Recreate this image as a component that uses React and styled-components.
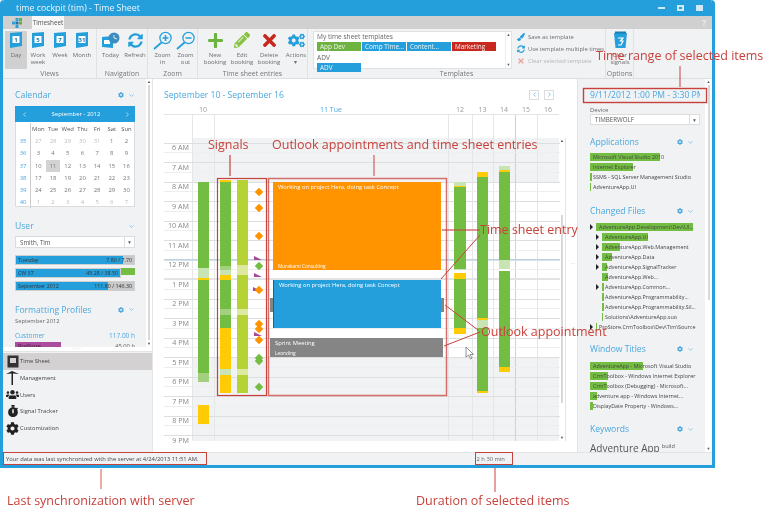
import React from 'react';
import styled, { createGlobalStyle } from 'styled-components';
import { FaCog, FaCogs, FaPencilAlt, FaPlus, FaTimes, FaSyncAlt, FaUsers, FaStopwatch, FaPaintBrush } from 'react-icons/fa';
import { FiChevronDown, FiChevronLeft, FiChevronRight } from 'react-icons/fi';

const Global = createGlobalStyle`
  html, body { margin: 0; padding: 0; background: #fff; }
  * { box-sizing: border-box; }
  body { font-family: "Open Sans", "Liberation Sans", sans-serif; color: #444; }
`;

const BLUE = '#259fdb';
const GREEN = '#74bd43';
const LIGHT = '#c8e3b4';
const YELLOW = '#ffcb05';
const LIME = '#b5d334';
const LIME_L = '#dde9a0';
const MID = '#a2d07f';

const Page = styled.div`
  position: relative;
  width: 764px;
  height: 509px;
  overflow: hidden;
  background: #fff;
  filter: blur(0.3px);
`;
const Window = styled.div`
  width: 715px;
  height: 468px;
  display: flex;
  flex-direction: column;
  border: solid ${BLUE};
  border-width: 0 3px 3px 3px;
  border-radius: 4px 4px 0 0;
  background: #f1f2f4;
  overflow: hidden;
`;
const TitleBar = styled.div`
  height: 16px;
  flex: none;
  display: flex;
  align-items: center;
  justify-content: space-between;
  padding: 0 3px 0 13px;
  background: ${BLUE};
  color: #e8f5fc;
  font-size: 8.8px;
`;
const WinButtons = styled.div`
  display: flex;
  gap: 12px;
  align-items: center;
  margin-right: 6px;
`;
const WinBtn = styled.span`
  display: block;
  width: 7px;
  height: ${p => p.$h}px;
  background: ${p => p.$hollow ? 'transparent' : '#cfe9f7'};
  border: ${p => p.$hollow ? '2px solid #cfe9f7' : 'none'};
`;
const TabRow = styled.div`
  height: 13px;
  flex: none;
  display: flex;
  align-items: stretch;
  background: #d0d0d0;
  padding-left: 9px;
`;
const Logo = styled.div`
  width: 20px;
  display: flex;
  align-items: center;
`;
const Tab = styled.div`
  width: 32px;
  background: #f7f7f8;
  font-size: 6.3px;
  line-height: 13px;
  text-align: center;
  color: #555;
`;
const TabHelp = styled.div`
  margin-left: auto;
  margin-right: 6px;
  color: #eee;
  font-size: 8px;
  font-weight: 700;
  line-height: 13px;
`;
const Ribbon = styled.div`
  height: 50px;
  flex: none;
  display: flex;
  background: #f1f2f4;
  border-bottom: 1px solid #dcdee0;
`;
const Group = styled.div`
  width: ${p => p.$w}px;
  flex: none;
  display: flex;
  flex-direction: column;
  border-right: 1px solid #dfe1e3;
`;
const GroupBody = styled.div`
  height: 40px;
  margin-top: 2px;
  padding: 0 ${p => p.$pad ?? 2}px;
  display: flex;
  gap: ${p => p.$gap ?? 0}px;
`;
const GroupLabel = styled.div`
  font-size: 6.9px;
  line-height: 9px;
  color: #777;
  text-align: center;
`;
const RibbonBtn = styled.div`
  width: ${p => p.$w ?? 22}px;
  height: 38px;
  flex: none;
  display: flex;
  flex-direction: column;
  align-items: center;
  background: ${p => p.$on ? '#d0d0d0' : 'transparent'};
  color: #6d6d6d;
  font-size: 6px;
  line-height: 7px;
  text-align: center;
  white-space: nowrap;
`;
const IconSlot = styled.div`
  height: 18px;
  margin-bottom: 3px;
  display: flex;
  align-items: center;
  justify-content: center;
  color: ${p => p.$c ?? BLUE};
`;
const TemplateBox = styled.div`
  width: 199px;
  height: 38px;
  flex: none;
  margin-left: 5px;
  padding: 2px 3px;
  background: #fff;
  border: 1px solid #dfe1e3;
  font-size: 6.6px;
  line-height: 6px;
  color: #666;
  position: relative;
`;
const ChipRow = styled.div`
  display: flex;
  gap: 1px;
  margin: 2px 0 4px;
`;
const Chip = styled.div`
  width: 44px;
  height: 9px;
  padding-left: 3px;
  background: ${p => p.$c};
  color: #f4f4f4;
  font-size: 6.4px;
  line-height: 9px;
  white-space: nowrap;
`;
const MiniScroll = styled.div`
  position: absolute;
  right: 0;
  top: 0;
  bottom: 0;
  width: 6px;
  display: flex;
  flex-direction: column;
  justify-content: space-between;
  align-items: center;
  color: #555;
  font-size: 4px;
  line-height: 6px;
  border-left: 1px solid #eee;
`;
const TemplateActions = styled.div`
  display: flex;
  flex-direction: column;
  gap: 3px;
  padding: 1px 0 0 5px;
`;
const ActionLine = styled.div`
  display: flex;
  align-items: center;
  gap: 3px;
  height: 9px;
  font-size: 5.8px;
  white-space: nowrap;
  color: ${p => p.$off ? '#b5b5b5' : '#6d6d6d'};
  svg { color: ${p => p.$c}; }
`;

const Body = styled.div`
  flex: 1;
  min-height: 0;
  display: flex;
`;
const Sidebar = styled.div`
  width: 149px;
  flex: none;
  display: flex;
  flex-direction: column;
  background: #f1f2f4;
`;
const SideTop = styled.div`
  height: 268px;
  flex: none;
  display: flex;
  overflow: hidden;
`;
const SideScroll = styled.div`
  width: 143px;
  flex: none;
  padding: 9px 0 0 12px;
  overflow: hidden;
`;
const ScrollStrip = styled.div`
  width: ${p => p.$w ?? 6}px;
  flex: none;
  background: #fff;
  display: flex;
  flex-direction: column;
  align-items: center;
  color: #555;
  font-size: 4px;
  line-height: 6px;
  span:last-child { margin-top: auto; }
`;
const StripThumb = styled.div`
  width: 2px;
  height: ${p => p.$h}px;
  background: #d9d9d9;
`;
const Heading = styled.div`
  display: flex;
  align-items: center;
  height: ${p => p.$h ?? 14}px;
  width: ${p => p.$w ?? 120}px;
  margin-top: ${p => p.$mt ?? 0}px;
  color: #4ba8de;
  font-size: 8.6px;
`;
const Tools = styled.div`
  display: flex;
  align-items: center;
  gap: 4px;
  margin-left: auto;
  color: #4ba8de;
`;
const Cal = styled.div`
  width: 120px;
  height: 101px;
  margin-top: 4px;
  background: #fff;
  border: solid #dcdcdc;
  border-width: 0 1px 1px 1px;
`;
const CalHead = styled.div`
  height: 16px;
  margin: 0 -1px;
  display: flex;
  align-items: center;
  justify-content: space-between;
  padding: 0 4px 0 6px;
  background: ${BLUE};
  color: #fff;
  font-size: 5.9px;
`;
const CalGrid = styled.div`
  display: grid;
  grid-template-columns: 15px repeat(7, 14.7px);
  grid-auto-rows: 12.2px;
  padding-top: 1px;
  font-size: 5.9px;
  line-height: 12.2px;
  text-align: center;
`;
const Cell = styled.div`
  color: ${p => p.$week ? '#4ba8de' : p.$head ? '#555' : p.$off ? '#bdbdbd' : '#777'};
  background: ${p => p.$sel ? '#d3d3d3' : 'transparent'};
  border-right: ${p => p.$week ? '1px solid #ccc' : 'none'};
`;
const Combo = styled.div`
  width: ${p => p.$w ?? 120}px;
  height: ${p => p.$h ?? 12}px;
  margin-top: ${p => p.$mt ?? 3}px;
  display: flex;
  align-items: center;
  justify-content: space-between;
  padding-left: 4px;
  background: #fff;
  border: 1px solid #dcdcdc;
  font-size: 6.2px;
  color: #555;
  span { width: 10px; border-left: 1px solid #ddd; text-align: center; font-size: 5px; line-height: 10px; color: #666; }
`;
const Progress = styled.div`
  width: ${p => p.$w}px;
  height: 10px;
  margin-top: ${p => p.$mt ?? 3}px;
  padding: 1px 2px 0;
  display: flex;
  justify-content: space-between;
  font-size: 5.3px;
  line-height: 7px;
  color: #333;
  white-space: nowrap;
  border: 1px solid #cfcfcf;
  background: linear-gradient(90deg, ${BLUE} ${p => p.$fill}px, #c9c9c9 0);
`;
const GreenTail = styled.div`
  display: flex;
  width: 120px;
`;
const TailPiece = styled.div`
  flex: 1;
  height: 7px;
  margin-top: 3px;
  background: ${GREEN};
`;
const SubTitle = styled.div`
  font-size: 5.8px;
  line-height: 8px;
  color: #666;
`;
const ProfileRow = styled.div`
  width: 120px;
  margin-top: ${p => p.$mt ?? 0}px;
  display: flex;
  justify-content: space-between;
  font-size: ${p => p.$size ?? 6.5}px;
  line-height: 9px;
  color: ${p => p.$c ?? '#4ba8de'};
`;
const Tag = styled.div`
  width: 46px;
  height: 8px;
  background: #ab4c9f;
  color: #3a1c36;
  font-size: 5.6px;
  line-height: 8px;
  padding-left: 3px;
`;
const Splitter = styled.div`
  height: 5px;
  flex: none;
  background: #fff;
  border-bottom: 1px solid #e4e4e4;
  text-align: center;
  color: #888;
  font-size: 4px;
  line-height: 4px;
  letter-spacing: 1px;
`;
const NavList = styled.div`
  flex: 1;
  padding-top: 1px;
`;
const NavItem = styled.div`
  height: 16.7px;
  display: flex;
  align-items: center;
  padding-left: 3px;
  gap: 1px;
  font-size: 5.8px;
  color: #444;
  background: ${p => p.$on ? '#d3d1d2' : 'transparent'};
`;
const NavIcon = styled.div`
  width: 13px;
  height: 14px;
  display: flex;
  align-items: center;
  justify-content: center;
  color: #222;
`;

const Main = styled.div`
  width: 426px;
  flex: none;
  position: relative;
  background: #fff;
  padding: 9px 0 0 11px;
  border-right: 1px solid #e2e3e5;
  border-left: 1px solid #e6e6e6;
`;
const MainHead = styled.div`
  height: 13px;
  width: 396px;
  display: flex;
  align-items: center;
  justify-content: space-between;
  font-size: 8.6px;
  color: #4ba8de;
`;
const NavPair = styled.div`
  display: flex;
  gap: 5px;
  margin-right: 6px;
`;
const NavBox = styled.div`
  width: 10px;
  height: 10px;
  border: 1px solid #dcdcdc;
  display: flex;
  align-items: center;
  justify-content: center;
  color: ${BLUE};
`;
const DayHead = styled.div`
  display: flex;
  height: 13px;
  padding-left: 28px;
  margin-top: 1px;
  border-bottom: 1px solid #e4e4e4;
  width: 395px;
`;
const DayName = styled.div`
  width: ${p => p.$w}px;
  flex: none;
  text-align: center;
  font-size: 7px;
  line-height: 15px;
  color: ${p => p.$today ? '#4ba8de' : '#999'};
`;
const Grid = styled.div`
  width: 403px;
  height: 326px;
  display: flex;
  position: relative;
`;
const TimeCol = styled.div`
  width: 28px;
  flex: none;
  padding-top: 27px;
`;
const TimeLabel = styled.div`
  height: 19.5px;
  font-size: 7.2px;
  line-height: 11px;
  text-align: right;
  padding-right: 3px;
  color: #888;
`;
const Day = styled.div`
  position: relative;
  width: ${p => p.$w}px;
  flex: none;
  display: flex;
  flex-direction: column;
  border-left: 1px solid ${p => p.$strong ? '#cfd1d3' : '#e4e6e8'};
`;
const Band = styled.div`
  height: ${p => p.$h}px;
  flex: none;
  background: ${p => p.$gray ? '#f1f2f4' : '#fff'};
`;
const HourLines = styled.div`
  position: absolute;
  left: 0;
  right: 7px;
  top: 23px;
  bottom: 0;
  pointer-events: none;
  background: repeating-linear-gradient(to bottom,
    transparent 0 4.5px, #dcdee0 4.5px 5.5px,
    transparent 5.5px 14.25px, #eceef0 14.25px 15.25px, transparent 15.25px 19.5px);
`;
const NoonLine = styled.div`
  position: absolute;
  left: 0;
  right: 7px;
  top: ${p => p.$top}px;
  height: ${p => p.$h ?? 1}px;
  background: ${p => p.$c};
`;
const EventLayer = styled.div`
  position: absolute;
  inset: 0;
`;
const Stack = styled.div`
  position: absolute;
  left: ${p => p.$x}px;
  top: ${p => p.$y}px;
  width: ${p => p.$w ?? 11}px;
  display: flex;
  flex-direction: column;
`;
const Seg = styled.div`
  height: ${p => p.$h}px;
  background: ${p => p.$c};
`;
const Block = styled.div`
  position: absolute;
  left: ${p => p.$x}px;
  top: ${p => p.$y}px;
  width: ${p => p.$w}px;
  height: ${p => p.$h}px;
  background: ${p => p.$c};
  color: #fff;
  font-size: 5.8px;
  line-height: 8px;
  padding: 1px 5px;
  display: flex;
  flex-direction: column;
  justify-content: space-between;
  white-space: nowrap;
  border-left: ${p => p.$edge ? `1px solid ${p.$edge}` : 'none'};
`;
const BlockSub = styled.span`
  font-size: 4.8px;
  line-height: 6px;
`;
const Diamond = styled.div`
  position: absolute;
  left: ${p => p.$x - 3}px;
  top: ${p => p.$y - 3}px;
  width: 6px;
  height: 6px;
  transform: rotate(45deg);
  background: ${p => p.$c};
`;
const Flag = styled.div`
  position: absolute;
  left: ${p => p.$x - 4}px;
  top: ${p => p.$y - 2}px;
  width: 0;
  height: 0;
  border-left: 8px solid #a8479b;
  border-top: 4px solid transparent;
`;
const GridScroll = styled.div`
  width: 7px;
  flex: none;
  margin-top: 23px;
  display: flex;
  flex-direction: column;
  align-items: center;
  justify-content: space-between;
  font-size: 4px;
  line-height: 6px;
  color: #555;
  position: relative;
  border-right: 1px solid #e4e4e4;
`;
const Thumb = styled.div`
  position: absolute;
  top: 77px;
  height: 188px;
  width: 2px;
  background: #d9d9d9;
`;
const Grip = styled.div`
  position: absolute;
  right: 3px;
  top: 183px;
  font-size: 5px;
  line-height: 2.5px;
  width: 3px;
  color: #bbb;
`;

const RightPanel = styled.div`
  width: 134px;
  flex: none;
  display: flex;
  overflow: hidden;
`;
const RightScroll = styled.div`
  width: 127px;
  flex: none;
  padding: 10px 0 0 12px;
  background: #f1f2f4;
  overflow: hidden;
`;
const DateRange = styled.div`
  width: 110px;
  font-size: 8.6px;
  line-height: 12px;
  white-space: nowrap;
  overflow: hidden;
  color: #4ba8de;
`;
const Small = styled.div`
  margin-top: 5px;
  font-size: 6px;
  line-height: 8px;
  color: #666;
`;
const Spacer = styled.div`
  height: ${p => p.$h}px;
`;
const ListRow = styled.div`
  width: ${p => p.$w ?? 114}px;
  height: 10px;
  margin-left: ${p => p.$indent ?? 0}px;
  position: relative;
  display: flex;
  align-items: center;
  padding-left: 3px;
  font-size: 5.4px;
  line-height: 8px;
  white-space: nowrap;
  color: #444;
  background: linear-gradient(90deg, ${GREEN} ${p => p.$fill}px, transparent 0) no-repeat 0 1px / 100% 8px;
`;
const Arrow = styled.span`
  position: absolute;
  left: -6px;
  top: 2px;
  width: 0;
  height: 0;
  border-left: 3px solid #222;
  border-top: 3px solid transparent;
  border-bottom: 3px solid transparent;
`;
const Keyword = styled.div`
  margin-top: 5px;
  font-size: 10px;
  line-height: 14px;
  color: #555;
  white-space: nowrap;
  sup { font-size: 5.6px; line-height: 0; vertical-align: 4px; margin-left: 2px; }
`;

const Status = styled.div`
  height: 13px;
  flex: none;
  display: flex;
  align-items: center;
  padding-left: 3px;
  font-size: 5.8px;
  color: #444;
  background: #f1f2f4;
  border-top: 1px solid #e4e4e4;
`;
const Duration = styled.div`
  margin-left: 278px;
  color: #666;
`;

// the red notes and lines drawn on top of the screenshot
const Note = styled.div`
  position: absolute;
  left: ${p => p.$x}px;
  top: ${p => p.$y}px;
  color: #c8423c;
  font-size: 12.5px;
  line-height: 18px;
  white-space: nowrap;
`;
const Lines = styled.svg`
  position: absolute;
  inset: 0;
  pointer-events: none;
`;

function CalIcon({ n }) {
  return (
    <svg width="14" height="17" viewBox="0 0 14 17">
      <path d="M1 1 L13 0 V14 L1 16 Z" fill={BLUE} />
      <rect x="3.5" y="4" width="7" height="7" fill="#fff" />
      <text x="7" y="10" fontSize="6" fontFamily="Open Sans" fontWeight="700" textAnchor="middle" fill="#257aa8">{n}</text>
    </svg>
  );
}
function ZoomIcon({ plus }) {
  return (
    <svg width="21" height="19" viewBox="0 0 21 19" fill="none" stroke={BLUE}>
      <circle cx="13.5" cy="7" r="5.6" strokeWidth="1.3" />
      <path d="M9.5 11.5 L2 18" strokeWidth="1.8" />
      <path d="M10.5 7 H16.5" strokeWidth="1.6" />
      {plus && <path d="M13.5 4 V10" strokeWidth="1.6" />}
    </svg>
  );
}
function TodayIcon() {
  return (
    <svg width="18" height="17" viewBox="0 0 18 17">
      <path d="M0 5 L11 4 V16 L0 15 Z" fill={BLUE} />
      <rect x="2" y="8" width="6" height="4" fill="#fff" />
      <circle cx="12" cy="6" r="5.5" fill="#3b8dbd" />
      <path d="M12 3 V6 L15 7" stroke="#fff" fill="none" strokeWidth="0.8" />
    </svg>
  );
}
function LogoIcon() {
  return (
    <svg width="10" height="10" viewBox="0 0 10 10">
      <rect x="3.5" y="0" width="3" height="3" fill="#2f9fd8" />
      <rect x="7" y="0" width="3" height="3" fill="#5fb346" />
      <rect x="0" y="3.5" width="3" height="3" fill="#2f9fd8" />
      <rect x="3.5" y="3.5" width="3" height="3" fill="#2c6ea0" />
      <rect x="7" y="3.5" width="3" height="3" fill="#5fb346" />
      <rect x="3.5" y="7" width="3" height="3" fill="#2f9fd8" />
    </svg>
  );
}
function TrashIcon() {
  return (
    <svg width="15" height="18" viewBox="0 0 15 18">
      <path d="M1 2 H14 L12.5 17 H2.5 Z" fill={BLUE} />
      <rect x="2" y="0.5" width="11" height="2" fill="#1a7fb4" />
      <path d="M5 7 H10 L7.5 10 H10 L8 14 H5" fill="none" stroke="#fff" strokeWidth="1.2" />
    </svg>
  );
}
function HammerIcon() {
  return (
    <svg width="13" height="14" viewBox="0 0 13 14">
      <path d="M0 3 L6 0 L13 3 L7 2.5 V14 H5.5 V2.5 Z" fill="#222" />
    </svg>
  );
}
function SheetIcon() {
  return (
    <svg width="12" height="13" viewBox="0 0 12 13">
      <rect x="0.5" y="0.5" width="11" height="12" fill="#333" />
      <rect x="3" y="3" width="6" height="5" fill="#d3d1d2" />
    </svg>
  );
}
function PanelTools({ gear = true }) {
  return (
    <Tools>
      {gear && <FaCog size={6} />}
      <FiChevronDown size={7} />
    </Tools>
  );
}

const weeks = [
  ['35', 27, 28, 29, 30, 31, 1, 2],
  ['36', 3, 4, 5, 6, 7, 8, 9],
  ['37', 10, 11, 12, 13, 14, 15, 16],
  ['38', 17, 18, 19, 20, 21, 22, 23],
  ['39', 24, 25, 26, 27, 28, 29, 30],
  ['40', 1, 2, 3, 4, 5, 6, 7],
];
const hours = ['6 AM', '7 AM', '8 AM', '9 AM', '10 AM', '11 AM', '12 PM', '1 PM', '2 PM', '3 PM', '4 PM', '5 PM', '6 PM', '7 PM', '8 PM', '9 PM'];
const dayCols = [
  { n: '10', w: 22 },
  { n: '11 Tue', w: 234, today: true },
  { n: '12', w: 24 },
  { n: '13', w: 21 },
  { n: '14', w: 22 },
  { n: '15', w: 22, strong: true },
  { n: '16', w: 22 },
];
// y values below are page coordinates, the layer starts at page y 115 and x 164
const stacks = [
  { x: 198, y: 182, segs: [[86, GREEN], [10, LIGHT], [2, YELLOW], [93, GREEN], [9, MID]] },
  { x: 198, y: 405, segs: [[19, YELLOW]] },
  { x: 220, y: 180, segs: [[2, YELLOW], [84, GREEN], [4, MID], [5, LIGHT], [5, YELLOW], [29, GREEN], [6, MID], [13, GREEN], [41, YELLOW], [6, LIGHT], [18, YELLOW]] },
  { x: 237, y: 180, segs: [[85, LIME], [10, LIME_L], [34, LIME], [6, LIME_L], [54, LIME], [6, LIME_L], [18, LIME]] },
  { x: 454, y: 182, w: 12, segs: [[4, LIGHT], [1, YELLOW], [82, GREEN], [1, LIGHT]] },
  { x: 454, y: 273, w: 12, segs: [[6, YELLOW], [49, GREEN], [6, YELLOW]] },
  { x: 477, y: 172, segs: [[5, YELLOW], [141, GREEN], [2, YELLOW], [8, LIGHT], [63, GREEN], [2, YELLOW]] },
  { x: 499, y: 166, segs: [[4, LIGHT], [2, YELLOW], [88, GREEN], [9, LIGHT], [2, '#fff'], [96, GREEN], [5, YELLOW]] },
];
const diamonds = [
  [259, 192, '#ff9300'], [259, 208, '#ff9300'], [259, 236, '#ff9300'], [259, 266, GREEN], [259, 290, '#ff9300'],
  [259, 324, '#ff9300'], [259, 329, '#ff9300'], [259, 340, '#ff9300'], [259, 358, GREEN], [259, 361, GREEN], [259, 387, GREEN],
];
const flags = [[258, 258], [258, 275], [258, 334], [257, 289]];
const apps = [['Microsoft Visual Studio 2010', 70], ['Internet Explorer', 43], ['SSMS - SQL Server Management Studio', 2], ['AdventureApp.UI', 1]];
const files = [
  ['AdventureApp.Development\\Dev\\UI...', 97, 6, true],
  ['AdventureApp.UI', 46, 12, true],
  ['AdventureApp.Web.Management', 18, 12, true],
  ['AdventureApp.Data', 10, 12, true],
  ['AdventureApp.SignalTracker', 5, 12, true],
  ['AdventureApp.Web...', 6, 12, false],
  ['AdventureApp.Common...', 2, 12, true],
  ['AdventureApp.Programmability...', 2, 12, false],
  ['AdventureApp.Programmability.Sil...', 2, 12, false],
  ['Solutions\\AdventureApp.suo', 1, 12, false],
  ['ProStore.CrmToolbox\\Dev\\Tim\\Source', 1, 6, true],
];
const titles = [['AdventureApp - Microsoft Visual Studio', 53], ['CrmToolbox - Windows Internet Explorer', 18], ['CrmToolbox (Debugging) - Microsoft...', 17], ['adventure app - Windows Internet...', 7], ['DisplayDate Property - Windows...', 3]];

export default function App() {
  return (
    <Page>
      <Global />
      <Window>
        <TitleBar>
          <span>time cockpit (tim) - Time Sheet</span>
          <WinButtons>
            <WinBtn $h={2} />
            <WinBtn $h={6} $hollow />
            <WinBtn $h={6} />
          </WinButtons>
        </TitleBar>
        <TabRow>
          <Logo><LogoIcon /></Logo>
          <Tab>Timesheet</Tab>
          <TabHelp>?</TabHelp>
        </TabRow>
        <Ribbon>
          <Group $w={94}>
            <GroupBody $pad={2}>
              <RibbonBtn $on><IconSlot><CalIcon n="1" /></IconSlot>Day</RibbonBtn>
              <RibbonBtn><IconSlot><CalIcon n="5" /></IconSlot>Work<br />week</RibbonBtn>
              <RibbonBtn><IconSlot><CalIcon n="7" /></IconSlot>Week</RibbonBtn>
              <RibbonBtn><IconSlot><CalIcon n="31" /></IconSlot>Month</RibbonBtn>
            </GroupBody>
            <GroupLabel>Views</GroupLabel>
          </Group>
          <Group $w={51}>
            <GroupBody $pad={1}>
              <RibbonBtn $w={25}><IconSlot><TodayIcon /></IconSlot>Today</RibbonBtn>
              <RibbonBtn $w={24}><IconSlot><FaSyncAlt size={15} /></IconSlot>Refresh</RibbonBtn>
            </GroupBody>
            <GroupLabel>Navigation</GroupLabel>
          </Group>
          <Group $w={50}>
            <GroupBody $pad={3}>
              <RibbonBtn $w={23}><IconSlot><ZoomIcon plus /></IconSlot>Zoom<br />in</RibbonBtn>
              <RibbonBtn $w={23}><IconSlot><ZoomIcon /></IconSlot>Zoom<br />out</RibbonBtn>
            </GroupBody>
            <GroupLabel>Zoom</GroupLabel>
          </Group>
          <Group $w={110}>
            <GroupBody $pad={5} $gap={3}>
              <RibbonBtn $w={24}><IconSlot $c="#6cb33f"><FaPlus size={17} /></IconSlot>New<br />booking</RibbonBtn>
              <RibbonBtn $w={24}><IconSlot $c="#86c440"><FaPencilAlt size={16} /></IconSlot>Edit<br />booking</RibbonBtn>
              <RibbonBtn $w={24}><IconSlot $c="#c8281e"><FaTimes size={19} /></IconSlot>Delete<br />booking</RibbonBtn>
              <RibbonBtn $w={24}><IconSlot><FaCogs size={17} /></IconSlot>Actions<br />▾</RibbonBtn>
            </GroupBody>
            <GroupLabel>Time sheet entries</GroupLabel>
          </Group>
          <Group $w={298}>
            <GroupBody $pad={0}>
              <TemplateBox>
                My time sheet templates
                <ChipRow>
                  <Chip $c="#6cb33f">App Dev</Chip>
                  <Chip $c={BLUE}>Comp Time...</Chip>
                  <Chip $c={BLUE}>Content...</Chip>
                  <Chip $c="#c8281e">Marketing</Chip>
                </ChipRow>
                ADV
                <ChipRow>
                  <Chip $c={BLUE}>ADV</Chip>
                </ChipRow>
                <MiniScroll><span>▲</span><span>▼</span></MiniScroll>
              </TemplateBox>
              <TemplateActions>
                <ActionLine $c={BLUE}><FaPaintBrush size={8} />Save as template</ActionLine>
                <ActionLine $c={BLUE}><FaSyncAlt size={8} />Use template multiple times</ActionLine>
                <ActionLine $off $c="#e8a79f"><FaTimes size={8} />Clear selected template</ActionLine>
              </TemplateActions>
            </GroupBody>
            <GroupLabel>Templates</GroupLabel>
          </Group>
          <Group $w={28}>
            <GroupBody $pad={2}>
              <RibbonBtn $w={24}><IconSlot><TrashIcon /></IconSlot>Clear<br />signals</RibbonBtn>
            </GroupBody>
            <GroupLabel>Options</GroupLabel>
          </Group>
        </Ribbon>
        <Body>
          <Sidebar>
            <SideTop>
              <SideScroll>
                <Heading>Calendar<PanelTools /></Heading>
                <Cal>
                  <CalHead><FiChevronLeft size={7} />September - 2012<FiChevronRight size={7} /></CalHead>
                  <CalGrid>
                    <Cell $week />
                    {['Mon', 'Tue', 'Wed', 'Thu', 'Fri', 'Sat', 'Sun'].map(d => <Cell $head key={d}>{d}</Cell>)}
                    {weeks.map((w, i) => w.map((v, j) => j === 0
                      ? <Cell $week key={`${i}-${j}`}>{v}</Cell>
                      : <Cell key={`${i}-${j}`} $sel={v === 11} $off={(i === 0 && j < 6) || i === 5}>{v}</Cell>))}
                  </CalGrid>
                </Cal>
                <Heading $mt={12}>User<PanelTools gear={false} /></Heading>
                <Combo>Smith, Tim<span>▼</span></Combo>
                <Progress $w={120} $fill={107} $mt={7}><span>Tuesday</span><span>7.80 / 7.70</span></Progress>
                <GreenTail>
                  <Progress $w={106} $fill={104} $mt={3}><span>CW 37</span><span>45.28 / 38.50</span></Progress>
                  <TailPiece />
                </GreenTail>
                <Progress $w={120} $fill={92} $mt={3}><span>September 2012</span><span>111.80 / 146.30</span></Progress>
                <Heading $h={15} $mt={11}>Formatting Profiles<PanelTools /></Heading>
                <SubTitle>September 2012</SubTitle>
                <ProfileRow $mt={6}><span>Customer</span><span>117.00 h</span></ProfileRow>
                <ProfileRow $mt={2} $size={5.8} $c="#666"><Tag>ProStore</Tag><span>45.00 h</span></ProfileRow>
              </SideScroll>
              <ScrollStrip $w={6}><span>▲</span><StripThumb $h={255} /><span>▼</span></ScrollStrip>
            </SideTop>
            <Splitter>····</Splitter>
            <NavList>
              <NavItem $on><NavIcon><SheetIcon /></NavIcon>Time Sheet</NavItem>
              <NavItem><NavIcon><HammerIcon /></NavIcon>Management</NavItem>
              <NavItem><NavIcon><FaUsers size={13} /></NavIcon>Users</NavItem>
              <NavItem><NavIcon><FaStopwatch size={12} /></NavIcon>Signal Tracker</NavItem>
              <NavItem><NavIcon><FaCog size={13} /></NavIcon>Customization</NavItem>
            </NavList>
          </Sidebar>
          <Main>
            <MainHead>
              <span>September 10 - September 16</span>
              <NavPair>
                <NavBox><FiChevronLeft size={7} /></NavBox>
                <NavBox><FiChevronRight size={7} /></NavBox>
              </NavPair>
            </MainHead>
            <DayHead>
              {dayCols.map(d => <DayName key={d.n} $w={d.w} $today={d.today}>{d.n}</DayName>)}
            </DayHead>
            <Grid>
              <TimeCol>
                {hours.map(h => <TimeLabel key={h}>{h}</TimeLabel>)}
              </TimeCol>
              {dayCols.map(d => (
                <Day key={d.n} $w={d.w} $strong={d.strong}>
                  <Band $h={23} />
                  <Band $h={44} $gray />
                  <Band $h={175} />
                  <Band $h={84} $gray />
                </Day>
              ))}
              <GridScroll>
                <span>▲</span>
                <Thumb />
                <span>▼</span>
              </GridScroll>
              <HourLines />
              <NoonLine $top={144} $c="#b9d4e6" />
              <NoonLine $top={163} $h={2} $c="#e1e3e5" />
              <EventLayer>
                {stacks.map(s => (
                  <Stack key={`${s.x}-${s.y}`} $x={s.x - 164} $y={s.y - 115} $w={s.w}>
                    {s.segs.map(([h, c], i) => <Seg key={i} $h={h} $c={c} />)}
                  </Stack>
                ))}
                {flags.map(([x, y]) => <Flag key={`${x}-${y}`} $x={x - 164} $y={y - 115} />)}
                {diamonds.map(([x, y, c]) => <Diamond key={`${x}-${y}`} $x={x - 164} $y={y - 115} $c={c} />)}
                <Block $x={273 - 164} $y={182 - 115} $w={168} $h={88} $c="#ff9300">
                  <span>Working on project Hera, doing task Concept</span>
                  <BlockSub>Murakami Consulting</BlockSub>
                </Block>
                <Block $x={270 - 164} $y={298 - 115} $w={174} $h={14} $c="#858585" />
                <Block $x={273 - 164} $y={280 - 115} $w={168} $h={48} $c={BLUE} $edge="#2a5d7a">
                  <span>Working on project Hera, doing task Concept</span>
                </Block>
                <Block $x={270 - 164} $y={338 - 115} $w={173} $h={19} $c="#858585">
                  <span>Sprint Meeting</span>
                  <BlockSub>Leonding</BlockSub>
                </Block>
              </EventLayer>
            </Grid>
            <Grip>···</Grip>
          </Main>
          <RightPanel>
            <RightScroll>
              <DateRange>9/11/2012 1:00 PM - 3:30 PM</DateRange>
              <Small>Device</Small>
              <Combo $w={110} $h={11} $mt={0}>TIMBERWOLF<span>▼</span></Combo>
              <Heading $w={104} $h={16} $mt={9}>Applications<PanelTools /></Heading>
              <Spacer $h={2} />
              {apps.map(([t, f]) => <ListRow key={t} $fill={f}>{t}</ListRow>)}
              <Heading $w={104} $h={16} $mt={11}>Changed Files<PanelTools /></Heading>
              <Spacer $h={3} />
              {files.map(([t, f, ind, arrow]) => (
                <ListRow key={t} $fill={f} $indent={ind} $w={109}>{arrow && <Arrow />}{t}</ListRow>
              ))}
              <Heading $w={104} $mt={10}>Window Titles<PanelTools /></Heading>
              <Spacer $h={5} />
              {titles.map(([t, f]) => <ListRow key={t} $fill={f}>{t}</ListRow>)}
              <Heading $w={104} $mt={11}>Keywords<PanelTools /></Heading>
              <Keyword>Adventure App<sup>build</sup></Keyword>
            </RightScroll>
            <ScrollStrip $w={7}><span>▲</span><StripThumb $h={215} /><span>▼</span></ScrollStrip>
          </RightPanel>
        </Body>
        <Status>
          <span>Your data was last synchronized with the server at 4/24/2013 11:51 AM.</span>
          <Duration>2 h 30 min</Duration>
        </Status>
      </Window>

      <Lines width="764" height="509" viewBox="0 0 764 509" fill="none">
        <g stroke="#c8423c" strokeWidth="1">
          <rect x="583.5" y="88.5" width="123" height="14" strokeWidth="1.4" />
          <rect x="3.5" y="452.5" width="203" height="12" />
          <rect x="475.5" y="452.5" width="37" height="12" />
          <rect x="217.5" y="178.5" width="49" height="217" strokeWidth="1.2" />
          <rect x="268.5" y="178.5" width="178" height="217" strokeWidth="1.5" opacity="0.75" />
          <path d="M680 66 V87" />
          <path d="M230 155 V176" strokeWidth="2" opacity="0.6" />
          <path d="M374 155 V176" />
          <path d="M442 230 H480" strokeWidth="1.5" opacity="0.7" />
          <path d="M441 279 L480 235" />
          <path d="M445 305 L478 330" />
          <path d="M444 346 L480 332" />
          <path d="M101 469 V489" strokeWidth="1.5" opacity="0.6" />
          <path d="M495 468 V492" />
        </g>
        <path d="M466 347 V357 L468.5 355 L470.5 359 L472 358 L470 354.5 L473.5 354.5 Z" fill="#fff" stroke="#777" strokeWidth="0.8" />
      </Lines>
      <Note $x={208} $y={136}>Signals</Note>
      <Note $x={272} $y={136}>Outlook appointments and time sheet entries</Note>
      <Note $x={596} $y={47}>Time range of selected items</Note>
      <Note $x={480} $y={221}>Time sheet entry</Note>
      <Note $x={481} $y={323}>Outlook appointment</Note>
      <Note $x={7} $y={492}>Last synchronization with server</Note>
      <Note $x={416} $y={492}>Duration of selected items</Note>
    </Page>
  );
}
